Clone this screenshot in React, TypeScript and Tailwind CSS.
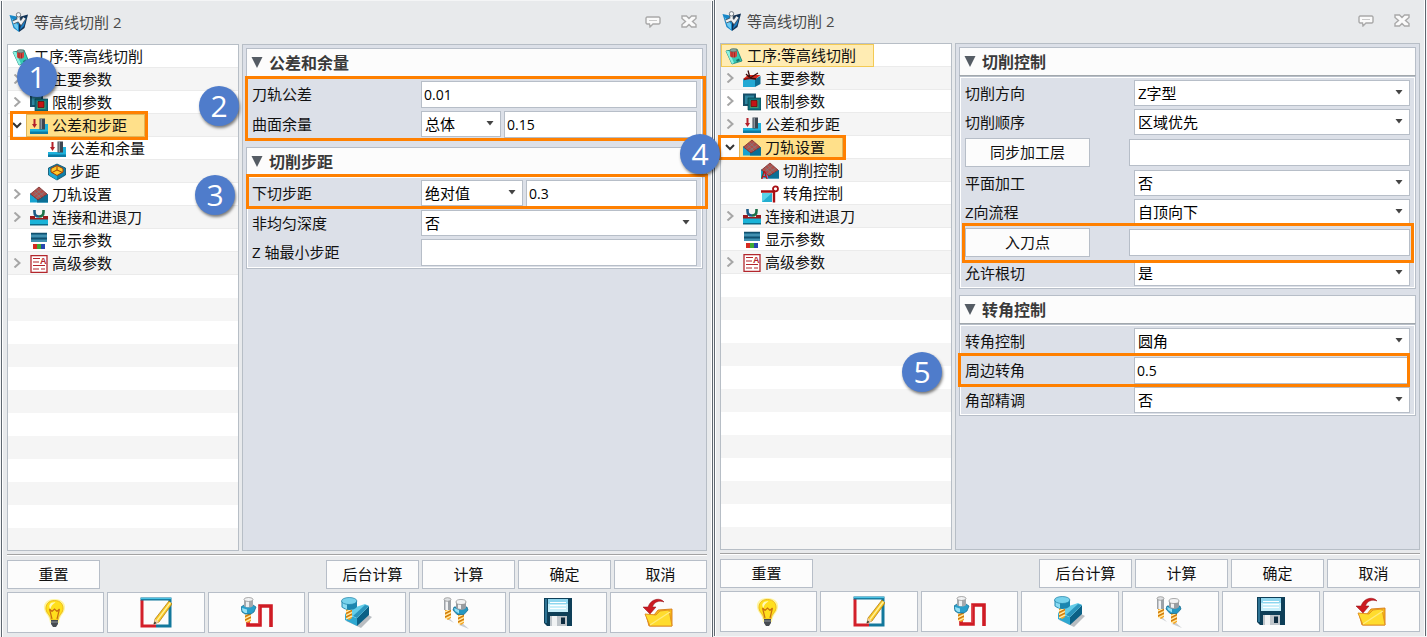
import React, { useId } from "react";
import clsx from "clsx";

/* ---------- tree icons (18 x 18) ---------- */

const Icon18 = ({ children }: { children: React.ReactNode }) => (
  <svg width="18" height="18" viewBox="0 0 18 18" className="shrink-0" aria-hidden="true">
    {children}
  </svg>
);

const OperationIcon = () => (
  <Icon18>
    <path d="M1 4 L12 2 L17 14 L7 17 Z" fill="#35c9b5" stroke="#0f7d74" strokeWidth="0.8" />
    <path d="M1 4 L7 17 L9 16 L4 4 Z" fill="#8cf0e0" />
    <path d="M5 3 V9 C6 11 11 11 12 9 V3 Z" fill="#d0453e" />
    <ellipse cx="8.5" cy="3.2" rx="3.5" ry="1.6" fill="#7fa39c" stroke="#4d6662" strokeWidth="0.6" />
    <path d="M7 5 V10 M9.5 5.4 V10.4" stroke="#8f1c1c" strokeWidth="0.7" />
    <path d="M11 13 L14 11.5 L15 13.5 L12 15 Z" fill="#17756e" />
  </Icon18>
);

const MainIcon = () => (
  <Icon18>
    <path d="M0 9 H12 V17 H0 Z" fill="#23a9d4" />
    <path d="M12 9 L17.5 6 V14 L12 17 Z" fill="#0d6c92" />
    <path d="M0 9 L5 5 H17.5 L12 9.5 Z" fill="#d8271c" />
    <path d="M5 0.5 L7 8 M3 4 L7 8 L15 3 M7 8 L13 9" stroke="#3b0d0d" strokeWidth="1.3" fill="none" />
    <path d="M1 9.5 L7 8" stroke="#7c1010" strokeWidth="1.5" />
  </Icon18>
);

const LimitIcon = () => (
  <Icon18>
    <path d="M0 0.5 H13 V13 H0 Z" fill="#17506a" />
    <path d="M2 2.5 H11 V11 H2 Z" fill="#2e86a0" />
    <path d="M5 5 H18 V17 H5 Z" fill="#0f7480" stroke="#06444c" strokeWidth="0.7" />
    <path d="M7 7 H15.5 V15 H7 Z" fill="#3f9a72" />
    <path d="M8 7.5 H14 V13.5 H8 Z" fill="#c31515" stroke="#5d0808" strokeWidth="0.7" />
  </Icon18>
);

const ToleranceIcon = () => (
  <Icon18>
    <path d="M0 12 H10 V7 H18 V16 H0 Z" fill="#1fb2dc" />
    <path d="M0 14.5 H18 V17 H0 Z" fill="#0b7aa3" />
    <path d="M9.5 1.5 H15 V12.5 H9.5 Z" fill="#3d4651" />
    <path d="M10.5 2 H12 V12 H10.5 Z" fill="#8b949e" />
    <path d="M3.5 2 H5.5 V7 H7 L4.5 11 L2 7 H3.5 Z" fill="#b3202a" />
  </Icon18>
);

const StepIcon = () => (
  <Icon18>
    <path d="M9 1 L17.5 5 V12 L9 17 L0.5 12 V5 Z" fill="#0f7fa6" stroke="#0a4f6b" strokeWidth="0.8" />
    <path d="M1 5 L9 9.5 V17 L1 12 Z" fill="#1fa9d2" />
    <path d="M9 2.5 L15 5.5 V9 L9 12.5 L3 9 V5.5 Z" fill="#ffc928" stroke="#a23c08" strokeWidth="1" />
    <path d="M9 3 V7 L4 9.5 M9 7 L14.5 9.5" stroke="#a23c08" strokeWidth="1" fill="none" />
  </Icon18>
);

const ToolpathShape = () => (
  <>
    <path d="M0 7 L7 12 L18 8 V16.5 H0 Z" fill="#17a3cf" />
    <path d="M7 13 L18 8 V16.5 H7 Z" fill="#0b6f95" />
    <path d="M0.5 8 L9 1 L17 8 L8 14 Z" fill="#b04f4a" stroke="#7a2a2a" strokeWidth="0.8" />
    <path d="M4 5.5 L11 12 M6.5 3.5 L13.5 10 M3.5 10 L11.5 3.5 M6 12 L14.5 6" stroke="#7d7f84" strokeWidth="0.8" />
  </>
);

const ToolpathIcon = () => (
  <Icon18>
    <ToolpathShape />
  </Icon18>
);

const CutControlIcon = () => (
  <Icon18>
    <ToolpathShape />
    <text x="0" y="17" fontSize="10" fontWeight="700" fontFamily="Liberation Sans, sans-serif" fill="#c01818">
      A
    </text>
  </Icon18>
);

const CornerIcon = () => (
  <Icon18>
    <path d="M1 8 H11 V17 H1 Z" fill="#24aed0" />
    <path d="M1 8 L11 8 L1 17 Z" fill="#5bd3ea" />
    <path d="M0 6.5 H13 V17.5" stroke="#a80f14" strokeWidth="2.4" fill="none" />
    <circle cx="14.5" cy="3.8" r="2.5" stroke="#a80f14" strokeWidth="1.8" fill="none" />
  </Icon18>
);

const LinkIcon = () => (
  <Icon18>
    <path d="M0 7 H5 V9 H13 V7 H18 V11 H0 Z" fill="#9c1a1c" />
    <path d="M0 10.5 H18 V16 H0 Z" fill="#19b3d8" />
    <path d="M0 15 H18 V16.5 H0 Z" fill="#0b6a88" />
    <path d="M4.5 1 V3 C4.5 6.5 6.5 7.5 9 7.5" stroke="#1a5a86" strokeWidth="2.6" fill="none" />
    <path d="M13.5 1 V3 C13.5 6.5 11.5 7.5 9 7.5" stroke="#1c7048" strokeWidth="2.6" fill="none" />
  </Icon18>
);

const DisplayIcon = () => (
  <Icon18>
    <path d="M1 1 H17 V10 H1 Z" fill="#2a7b9e" />
    <path d="M1 1.5 H17 M1 6.5 H17" stroke="#11506e" strokeWidth="1.4" />
    <path d="M1 4 H17 M1 9 H17" stroke="#67b3cc" strokeWidth="0.8" />
    <path d="M3 12 H7 V17 H3 Z" fill="#d62b20" />
    <path d="M7 12 H11 V17 H7 Z" fill="#3faa35" />
    <path d="M11 12 H15 V17 H11 Z" fill="#2746b0" />
  </Icon18>
);

const AdvancedIcon = () => (
  <Icon18>
    <path d="M1 0.5 H17 V17.5 H1 Z" fill="#fff" stroke="#b3272d" strokeWidth="1.3" />
    <path d="M3 3.5 H10 M3 7 H9 M3 10.5 H15 M3 14 H9 M11 14 H15" stroke="#b3272d" strokeWidth="1.2" />
    <text x="10" y="9" fontSize="9" fontWeight="700" fontFamily="Liberation Sans, sans-serif" fill="#b3272d">
      A
    </text>
  </Icon18>
);

/* ---------- title bar icons ---------- */

const AppIcon = () => (
  <svg width="20" height="20" viewBox="0 0 20 20" aria-hidden="true">
    <path d="M0.5 3 L10 5 V20 L4.5 16 Z" fill="#1787c8" />
    <path d="M19 2.5 L10 5 V20 L15.5 16 Z" fill="#0f3155" />
    <path d="M2.5 6 L9 13 V18.5 L5.5 15 Z" fill="#6fcaf1" />
    <path d="M12 13 L17.5 5 L15 14 L11 18 Z" fill="#1c7ec4" />
    <path d="M9.5 3 V8 L4 10.5 M9.5 8 L12 11 L15.5 6" stroke="#4b5661" strokeWidth="4" fill="none" />
    <path d="M9.5 3 V8 L4 10.5 M9.5 8 L12 11 L15.5 6" stroke="#eef1f4" strokeWidth="2.4" fill="none" />
    <circle cx="9.5" cy="2.8" r="2.2" fill="#f4f6f8" stroke="#59636d" strokeWidth="0.8" />
  </svg>
);

const CommentIcon = () => (
  <svg width="16" height="12" viewBox="0 0 16 12" aria-hidden="true">
    <path
      d="M2 1 H14 L15 2 V7 L14 8 H8 L5 11 L4.5 8 H2 L1 7 V2 Z"
      fill="#fafafa"
      stroke="#a9a9a9"
      strokeWidth="1.4"
    />
    <path d="M4 4.5 H12" stroke="#c9c9c9" />
  </svg>
);

const CloseIcon = () => (
  <svg width="16" height="13" viewBox="0 0 16 13" aria-hidden="true">
    <path
      d="M1 1 H5.5 L8 3.5 L10.5 1 H15 V3.5 L11.5 6.5 L15 9.5 V12 H10.5 L8 9.5 L5.5 12 H1 V9.5 L4.5 6.5 L1 3.5 Z"
      fill="#fafafa"
      stroke="#a9a9a9"
      strokeWidth="1.4"
    />
  </svg>
);

/* ---------- toolbar icons (32 x 32) ---------- */

const Icon32 = ({ children }: { children: React.ReactNode }) => (
  <svg width="32" height="32" viewBox="0 0 32 32" aria-hidden="true">
    {children}
  </svg>
);

const BulbIcon = () => (
  <Icon32>
    <g transform="translate(-1.5 0)">
      <path d="M16 2 C7 2 4 8 6 13.5 C7.5 18 11 19 11.5 26 H20.5 C21 19 24.5 18 26 13.5 C28 8 25 2 16 2 Z" fill="#fff27a" opacity="0.7" />
      <path d="M16 3.5 C9.5 3.5 7 8 7.5 12.5 C8 16.5 12 18 12.5 23 H19.5 C20 18 24 16.5 24.5 12.5 C25 8 22.5 3.5 16 3.5 Z" fill="#ffdf1c" stroke="#e8b010" strokeWidth="0.8" />
      <path d="M11 8 C12 5.5 15 5 17 5.5 C14 7 12.5 9 12 12 C11 11 10.5 9.5 11 8 Z" fill="#fff9b8" />
      <path d="M11 12 L13.5 22 M21 12 L18.5 22 M11 12 L13.5 14.5 L16 12 L18.5 14.5 L21 12" stroke="#c96f10" strokeWidth="1.2" fill="none" />
      <path d="M12.5 23 H19.5 V27 L17.5 30 H14.5 L12.5 27 Z" fill="#464b50" />
      <path d="M12.5 25 H19.5" stroke="#90969b" />
    </g>
  </Icon32>
);

const EditIcon = () => (
  <Icon32>
    <path d="M2 3 V29 H16" stroke="#d3202a" strokeWidth="3" fill="none" />
    <path d="M0.5 2 H30 V29 H16" stroke="#13789c" strokeWidth="3" fill="none" />
    <path d="M1 1.5 H31" stroke="#4cc3e4" strokeWidth="1.2" />
    <path d="M29 4 L32 7 L19 25 L14 27 L15 22 Z" fill="#f9c924" stroke="#a8700c" strokeWidth="0.7" />
    <path d="M30.5 5.5 L17 23.5" stroke="#fff2a0" strokeWidth="1.3" />
    <path d="M15 22 L19 25 L14 27 Z" fill="#f2d3a4" />
    <path d="M14.6 24.5 L16.5 26 L13.5 27.5 Z" fill="#333" />
  </Icon32>
);

const SpiralShank = ({ x, y }: { x: number; y: number }) => (
  <g transform={`translate(${x} ${y})`}>
    <path d="M0 0 H6 V9 L3 11 L0 9 Z" fill="#f5a623" />
    <path d="M0 3 L6 0 M0 6.5 L6 3.5 M0 10 L6 7" stroke="#fff0b8" strokeWidth="1.2" />
    <path d="M0 4.5 L6 1.5 M0 8 L6 5" stroke="#b35f0a" strokeWidth="0.8" />
  </g>
);

const PathIcon = () => (
  <Icon32>
    <path d="M7 23 V28 H19 V9 H30 V30" stroke="#cf1b24" strokeWidth="3.6" fill="none" />
    <path d="M18 9 V27" stroke="#e85a5f" strokeWidth="0.9" />
    <SpiralShank x={4} y={15} />
    <path d="M0 10 L3 8 H12 L15 10 L13 15 L10 17 H4 L1 15 Z" fill="#2a9fcb" stroke="#12688c" strokeWidth="0.7" />
    <path d="M1 11 L6 12.5 V16 H4 L1.5 14 Z" fill="#98e1f6" />
    <path d="M3 2 V9 C5 11 10 11 12 9 V2 Z" fill="#a5a9ad" />
    <path d="M5 2 H8 V10 H5 Z" fill="#eceef0" />
    <ellipse cx="7.5" cy="2.5" rx="4.5" ry="2" fill="#f1f2f3" stroke="#888" strokeWidth="0.7" />
  </Icon32>
);

const SolidCutIcon = () => (
  <Icon32>
    <path d="M5 24 L20 31 L31 20 L27 18 Z" fill="#b9bdc1" />
    <path d="M4 17 L16 21 V29 L4 23 Z" fill="#2ea8d1" />
    <path d="M16 21 L28 9 V18 L16 29 Z" fill="#0b6186" />
    <path d="M4 17 L9 12 L24 7 L28 9 L16 21 Z" fill="#64cde9" />
    <path d="M12 19 L24 8 L28 9 L16 21 Z" fill="#2a95bd" />
    <SpiralShank x={5} y={12} />
    <path d="M0.5 4 V10 C4 14 13 14 16 10 V4 Z" fill="#1b86b0" />
    <path d="M1.5 5 H6 V12.5 L1.5 10 Z" fill="#8cdcf3" />
    <ellipse cx="8.2" cy="4" rx="7.7" ry="3.5" fill="#77d2ec" stroke="#1b7ea5" strokeWidth="0.7" />
  </Icon32>
);

const ToolsIcon = () => (
  <Icon32>
    <path d="M6 22 L13 26 L9 22 Z M18 28 L28 32 L21 26 Z" fill="#c9ccd0" />
    <SpiralShank x={4} y={12} />
    <path d="M3 2 H10 V13 H3 Z" fill="#9da2a7" />
    <path d="M4.5 2 H7 V13 H4.5 Z" fill="#f2f3f4" />
    <ellipse cx="6.5" cy="2.5" rx="3.5" ry="1.8" fill="#dfe1e3" stroke="#888" strokeWidth="0.7" />
    <SpiralShank x={17} y={17} />
    <path d="M13 10 H26 L27 13 L23 17.5 H16 L12 13 Z" fill="#2497c3" stroke="#10678c" strokeWidth="0.7" />
    <path d="M13 11 L18 13 V16.5 L14 14 Z" fill="#93dff5" />
    <path d="M15 5 V11 C17 13.5 23 13.5 25 11 V5 Z" fill="#989da2" />
    <path d="M17 5 H20 V12 L17 11.5 Z" fill="#f0f1f2" />
    <ellipse cx="20" cy="5" rx="5" ry="2.5" fill="#f1f2f3" stroke="#888" strokeWidth="0.7" />
  </Icon32>
);

const SaveIcon = () => (
  <Icon32>
    <path d="M2 1 H30 V29 H5 L2 26 Z" fill="#0e3f58" />
    <path d="M3 2 H5 V26 H3 Z" fill="#2d7394" />
    <path d="M6 2 H26 V15 H6 Z" fill="#c8effa" />
    <path d="M6 2 H26 V7 H6 Z" fill="#8fd6ee" />
    <path d="M8 5.5 H24 M8 8.5 H24 M8 11.5 H24" stroke="#fff" strokeWidth="1.2" />
    <path d="M8 19 H25 V29 H8 Z" fill="#bfc5ca" />
    <path d="M10 19 H15 V29 H10 Z" fill="#f1f3f4" />
    <path d="M19 20.5 H23 V27 H19 Z" fill="#0e2c40" />
  </Icon32>
);

const OpenIcon = () => (
  <Icon32>
    <path d="M4 18 H12 L16 13 L30 12 V29 H7 Z" fill="#f7b916" stroke="#d67b1b" strokeWidth="0.9" />
    <path d="M3 17 L14 18 L18 14 L27 13 L30 29 H8 Z" fill="#ffdc2e" stroke="#e08d1d" strokeWidth="0.9" />
    <path d="M8 28 L28 15" stroke="#ffec80" strokeWidth="1.2" />
    <path d="M22 5 C19 0.5 9 1 6 10 L1 10 L8 17 L14 10 L10.5 10 C12 5 17 3 22 5 Z" fill="#cc1a22" stroke="#8f1015" strokeWidth="0.5" />
  </Icon32>
);

/* ---------- callouts ---------- */

type CalloutProps = { num?: number; className: string; badgeClass?: string };

const Callout = ({ num, className, badgeClass }: CalloutProps) => (
  <div className={clsx("pointer-events-none absolute z-10 border-[3px] border-[#ff8000]", className)}>
    {num && (
      <span
        className={clsx(
          "absolute flex size-10 items-center justify-center rounded-full bg-[#4f7ccb] text-[30px] leading-10 font-medium text-white shadow-[1px_2px_3px_rgba(0,0,0,0.5)]",
          badgeClass
        )}
      >
        {num}
      </span>
    )}
  </div>
);

/* ---------- tree ---------- */

type TreeItem = {
  label: string;
  icon: React.FC;
  level: number;
  open?: boolean;
  leaf?: boolean;
  state?: "active" | "root";
  callout?: CalloutProps;
};

const slotWidth = ["w-0", "w-[18px]", "w-9"];

const Tree = ({ items }: { items: TreeItem[] }) => (
  <ul className="w-[232px] shrink-0 border border-[#b7bec6] bg-[repeating-linear-gradient(#fff_0_23px,#f5f5f5_23px_46px)]">
    {items.map(({ label, icon: ItemIcon, level, open, leaf, state, callout }) => (
      <li key={label} className="relative flex h-[23px] border-b border-[#ebebeb]">
        <span className={clsx("flex shrink-0 items-center", slotWidth[level], open && "bg-white")}>
          {level === 1 && !leaf && (
            <svg
              width="10"
              height="10"
              viewBox="0 0 10 10"
              fill="none"
              strokeWidth="2"
              className={clsx("ml-1", open ? "stroke-[#333]" : "stroke-[#a6a6a6]")}
              aria-hidden="true"
            >
              <path d={open ? "M1 3 L5 7 L9 3" : "M2.5 0.5 L7.5 5 L2.5 9.5"} />
            </svg>
          )}
        </span>
        <button
          type="button"
          className={clsx(
            "flex h-[23px] items-center gap-1 border pr-[17px] pl-[3px] text-[15px] whitespace-nowrap",
            state === "active" && "border-[#dfb65a] bg-[#ffe08a]",
            state === "root" && "border-[#f3ca54] bg-[#ffecb3]",
            !state && "border-transparent"
          )}
        >
          <ItemIcon />
          {label}
        </button>
        {callout && <Callout {...callout} />}
      </li>
    ))}
  </ul>
);

/* ---------- form ---------- */

const boxClass = "border border-[#b7bec8] bg-white text-black outline-none";

const TextInput = ({ id, value = "", label }: { id?: string; value?: string; label?: string }) => (
  <input
    id={id}
    aria-label={label}
    defaultValue={value}
    className={clsx(boxClass, "h-[27px] w-0 min-w-0 flex-1 px-0.5 text-sm")}
  />
);

const Select = ({ id, value, className }: { id: string; value: string; className: string }) => (
  <div className={clsx("relative h-[26px]", className)}>
    <select id={id} className={clsx(boxClass, "block h-full w-full appearance-none pl-[3px] text-[15px]")}>
      <option>{value}</option>
    </select>
    <svg width="8" height="5" viewBox="0 0 8 5" className="pointer-events-none absolute top-2.5 right-[7px]" aria-hidden="true">
      <path d="M0.5 0 H7.5 L4 4.5 Z" fill="#444" />
    </svg>
  </div>
);

type RowProps = {
  label: string;
  select?: string;
  selectClass?: string;
  input?: string;
  button?: boolean;
  callout?: CalloutProps;
};

const Row = ({ label, select, selectClass = "flex-1", input, button, callout }: RowProps) => {
  const id = useId();

  if (button) {
    return (
      <div className="relative flex items-center">
        <div className="flex w-[164px] shrink-0">
          <button type="button" className="h-[29px] w-[125px] border border-[#b7bec8] bg-[#fcfcfc] text-[15px]">
            {label}
          </button>
        </div>
        <TextInput label={label} />
        {callout && <Callout {...callout} />}
      </div>
    );
  }

  return (
    <div className="relative flex gap-[3px]">
      <label htmlFor={id} className="-mr-[3px] w-[169px] shrink-0 text-[15px] leading-[26px]">
        {label}
      </label>
      {select && <Select id={id} value={select} className={selectClass} />}
      {input !== undefined && (
        <TextInput id={select ? undefined : id} label={select ? label : undefined} value={input} />
      )}
      {callout && <Callout {...callout} />}
    </div>
  );
};

type GroupProps = { title: string; rows: RowProps[]; callout?: CalloutProps };

const Group = ({ title, rows, callout }: GroupProps) => (
  <section>
    <h2 className="flex h-[29px] items-center gap-1.5 border border-[#b7bec8] border-b-[#a2a8ad] bg-[#fcfcfc] pl-1 text-base font-bold text-[#3a3a3a]">
      <svg width="12" height="11" viewBox="0 0 12 11" aria-hidden="true">
        <path d="M0.5 0 H11.5 L6 11 Z" fill="#555c64" />
      </svg>
      {title}
    </h2>
    <div className="relative border border-[#b7bec8]">
      <div className="border border-white px-1 pt-0.5 pb-px">
        <div className="flex flex-col gap-[3px]">
          {rows.map((row) => (
            <Row key={row.label} {...row} />
          ))}
        </div>
      </div>
      {callout && <Callout {...callout} />}
    </div>
  </section>
);

/* ---------- dialog ---------- */

const tools = [
  { name: "提示", icon: BulbIcon },
  { name: "编辑", icon: EditIcon },
  { name: "刀轨", icon: PathIcon },
  { name: "仿真", icon: SolidCutIcon },
  { name: "刀具", icon: ToolsIcon },
  { name: "保存", icon: SaveIcon },
  { name: "打开", icon: OpenIcon },
];

const ActionButton = ({ children }: { children: React.ReactNode }) => (
  <button type="button" className="h-[29px] w-[93px] border border-[#b7bec8] bg-[#fcfcfc] text-[15px]">
    {children}
  </button>
);

const Dialog = ({ items, groups }: { items: TreeItem[]; groups: GroupProps[] }) => (
  <div className="flex flex-1 border-x border-[#5e6770]">
    <div className="flex flex-1 flex-col border-x border-white bg-[#e8eaec] px-1 pb-1">
      <header className="flex h-[43px] items-center pr-2.5 pb-0.5 pl-0.5">
        <AppIcon />
        <h1 className="ml-[5px] flex-1 text-[15px] leading-6 text-[#4a4a4a]">等高线切削 2</h1>
        <button type="button" aria-label="反馈">
          <CommentIcon />
        </button>
        <button type="button" aria-label="关闭" className="ml-5">
          <CloseIcon />
        </button>
      </header>

      <main className="flex flex-1 gap-[3px]">
        <Tree items={items} />
        <div className="flex flex-1 flex-col gap-1.5 border border-[#b7bec6] bg-[#dce0e8] p-[3px]">
          {groups.map((group) => (
            <Group key={group.title} {...group} />
          ))}
        </div>
      </main>

      <hr className="mt-[3px] mb-1 h-0.5 border-t border-b border-t-[#a3a3a3] border-b-white" />

      <footer>
        <div className="flex gap-[3px]">
          <ActionButton>重置</ActionButton>
          <div className="flex-1" />
          <ActionButton>后台计算</ActionButton>
          <ActionButton>计算</ActionButton>
          <ActionButton>确定</ActionButton>
          <ActionButton>取消</ActionButton>
        </div>
        <div className="mt-[3px] flex gap-[3px]">
          {tools.map(({ name, icon: ToolIcon }) => (
            <button
              key={name}
              type="button"
              aria-label={name}
              className="flex h-[41px] flex-1 items-center justify-center border border-[#b7bec8] bg-[#fcfcfc]"
            >
              <ToolIcon />
            </button>
          ))}
        </div>
      </footer>
    </div>
  </div>
);

/* ---------- data ---------- */

const toleranceItems: TreeItem[] = [
  { label: "工序:等高线切削", icon: OperationIcon, level: 0 },
  { label: "主要参数", icon: MainIcon, level: 1 },
  { label: "限制参数", icon: LimitIcon, level: 1 },
  {
    label: "公差和步距",
    icon: ToleranceIcon,
    level: 1,
    open: true,
    state: "active",
    callout: { num: 1, className: "-top-[3px] left-0.5 h-[29px] w-[138px]", badgeClass: "-top-[57px] left-1" },
  },
  { label: "公差和余量", icon: ToleranceIcon, level: 2 },
  { label: "步距", icon: StepIcon, level: 2 },
  { label: "刀轨设置", icon: ToolpathIcon, level: 1 },
  { label: "连接和进退刀", icon: LinkIcon, level: 1 },
  { label: "显示参数", icon: DisplayIcon, level: 1, leaf: true },
  { label: "高级参数", icon: AdvancedIcon, level: 1 },
];

const toolpathItems: TreeItem[] = [
  { label: "工序:等高线切削", icon: OperationIcon, level: 0, state: "root" },
  { label: "主要参数", icon: MainIcon, level: 1 },
  { label: "限制参数", icon: LimitIcon, level: 1 },
  { label: "公差和步距", icon: ToleranceIcon, level: 1 },
  {
    label: "刀轨设置",
    icon: ToolpathIcon,
    level: 1,
    open: true,
    state: "active",
    callout: { num: 4, className: "-top-px -left-[3px] h-[25px] w-32", badgeClass: "-top-1 -left-[41px]" },
  },
  { label: "切削控制", icon: CutControlIcon, level: 2 },
  { label: "转角控制", icon: CornerIcon, level: 2 },
  { label: "连接和进退刀", icon: LinkIcon, level: 1 },
  { label: "显示参数", icon: DisplayIcon, level: 1, leaf: true },
  { label: "高级参数", icon: AdvancedIcon, level: 1 },
];

const toleranceGroups: GroupProps[] = [
  {
    title: "公差和余量",
    callout: { num: 2, className: "-top-0.5 -right-1 -bottom-px -left-0.5", badgeClass: "top-[7px] -left-[49px]" },
    rows: [
      { label: "刀轨公差", input: "0.01" },
      { label: "曲面余量", select: "总体", selectClass: "w-20", input: "0.15" },
    ],
  },
  {
    title: "切削步距",
    rows: [
      {
        label: "下切步距",
        select: "绝对值",
        selectClass: "w-[102px]",
        input: "0.3",
        callout: { num: 3, className: "-top-1.5 -right-[11px] -bottom-0.5 -left-1.5", badgeClass: "-top-0.5 -left-[54px]" },
      },
      { label: "非均匀深度", select: "否" },
      { label: "Z 轴最小步距", input: "" },
    ],
  },
];

const toolpathGroups: GroupProps[] = [
  {
    title: "切削控制",
    rows: [
      { label: "切削方向", select: "Z字型" },
      { label: "切削顺序", select: "区域优先" },
      { label: "同步加工层", button: true },
      { label: "平面加工", select: "否" },
      { label: "Z向流程", select: "自顶向下" },
      {
        label: "入刀点",
        button: true,
        callout: { className: "-top-[5px] -right-1 -bottom-1.5 -left-[3px]" },
      },
      { label: "允许根切", select: "是" },
    ],
  },
  {
    title: "转角控制",
    rows: [
      { label: "转角控制", select: "圆角" },
      {
        label: "周边转角",
        input: "0.5",
        callout: { num: 5, className: "-top-1 right-0 -bottom-[3px] -left-[7px]", badgeClass: "-top-1 -left-[59px]" },
      },
      { label: "角部精调", select: "否" },
    ],
  },
];

export default function App() {
  return (
    <div className="flex min-h-screen bg-[#f4f5f6] pr-px font-['Open_Sans','Noto_Sans_CJK_SC',sans-serif] text-[#111]">
      <div className="flex flex-1 pt-px pl-px">
        <Dialog items={toleranceItems} groups={toleranceGroups} />
      </div>
      <div className="flex flex-1 pb-px pl-px">
        <Dialog items={toolpathItems} groups={toolpathGroups} />
      </div>
    </div>
  );
}
